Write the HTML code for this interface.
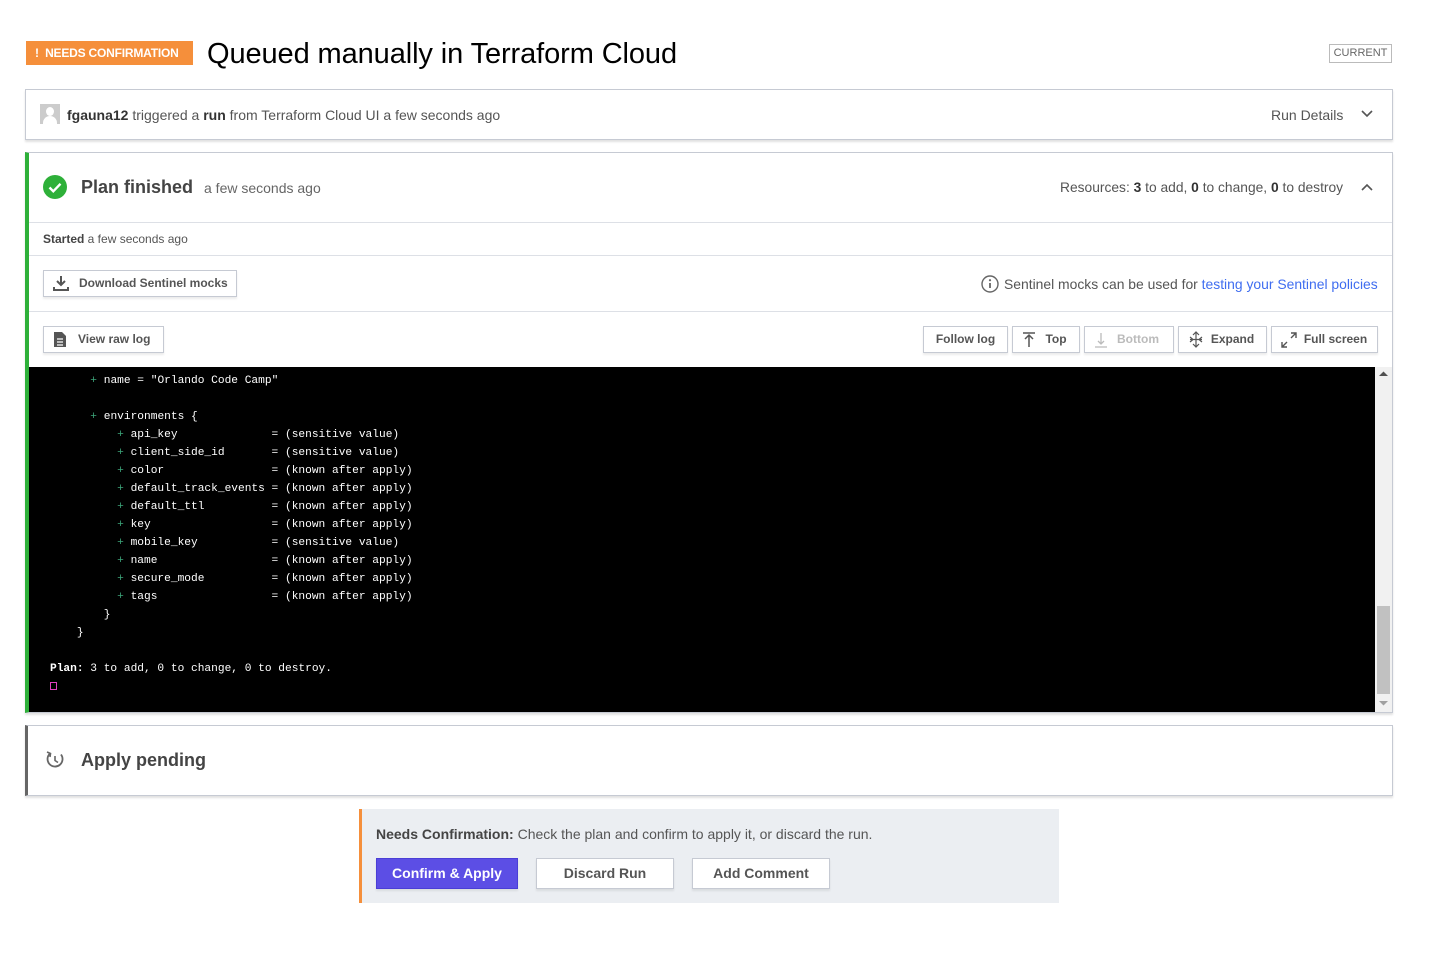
<!DOCTYPE html>
<html><head><meta charset="utf-8">
<style>
*{box-sizing:border-box;margin:0;padding:0}
body{width:1429px;height:956px;background:#fff;font-family:"Liberation Sans",sans-serif;color:#333;position:relative;overflow:hidden}
.abs{position:absolute}
.badge{left:26px;top:41px;width:167px;height:24px;background:#f58f3b;color:#fff;font-size:12px;font-weight:bold;line-height:24px;padding-left:9px;letter-spacing:-0.2px}
h1{position:absolute;left:207px;top:38px;font-size:29px;font-weight:normal;color:#000;letter-spacing:-0.1px}
.current{left:1329px;top:44px;width:63px;height:19px;border:1px solid #bbb;font-size:11px;color:#666;text-align:center;line-height:17px}
.card{border:1px solid #c6cad3;box-shadow:0 2px 2px rgba(0,0,0,.12);background:#fff}
.btn{position:absolute;height:27px;border:1px solid #c6cad3;box-shadow:0 2px 2px rgba(0,0,0,.08);background:#fff;font-size:12px;font-weight:bold;color:#555;line-height:25px;text-align:center}
.term{left:29px;top:367px;width:1346px;height:345px;background:#000;color:#fff;font-family:"Liberation Mono",monospace;font-size:11.2px;line-height:18px;white-space:pre;padding:5px 0 0 21px}
.g{color:#3da57a}
</style></head><body>
<div class="abs badge">!&nbsp;&nbsp;NEEDS CONFIRMATION</div>
<h1>Queued manually in Terraform Cloud</h1>
<div class="abs current">CURRENT</div>

<div class="abs card" style="left:25px;top:89px;width:1368px;height:51px"></div>
<div class="abs" style="left:40px;top:104px;width:20px;height:20px;background:#ccc;overflow:hidden"><div style="position:absolute;left:6px;top:3px;width:8px;height:9px;border-radius:50%;background:#fff"></div><div style="position:absolute;left:3px;top:12px;width:14px;height:10px;border-radius:7px 7px 0 0;background:#fff"></div></div>
<div class="abs" style="left:67px;top:107px;font-size:14px;color:#555"><b style="color:#333">fgauna12</b> triggered a <b style="color:#333">run</b> from Terraform Cloud UI a few seconds ago</div>
<div class="abs" style="left:1271px;top:107px;font-size:14px;color:#555">Run Details</div>
<svg class="abs" style="left:1361px;top:109px" width="12" height="10"><path d="M1 2l5 5 5-5" stroke="#555" stroke-width="1.6" fill="none"/></svg>

<div class="abs card" style="left:25px;top:152px;width:1368px;height:561px;border-left:4px solid #2eb039"></div>
<svg class="abs" style="left:43px;top:175px" width="24" height="24"><circle cx="12" cy="12" r="12" fill="#2eb039"/><path d="M6.5 12.5l3.8 3.8 7.2-7.5" stroke="#fff" stroke-width="2.4" fill="none"/></svg>
<div class="abs" style="left:81px;top:177px;font-size:18px;font-weight:bold;color:#444">Plan finished</div>
<div class="abs" style="left:204px;top:180px;font-size:14px;color:#666">a few seconds ago</div>
<div class="abs" style="left:1060px;top:180px;font-size:13.8px;color:#555">Resources: <b style="color:#333">3</b> to add, <b style="color:#333">0</b> to change, <b style="color:#333">0</b> to destroy</div>
<svg class="abs" style="left:1361px;top:183px" width="12" height="10"><path d="M1 7l5-5 5 5" stroke="#555" stroke-width="1.6" fill="none"/></svg>
<div class="abs" style="left:29px;top:222px;width:1363px;height:1px;background:#dde0e6"></div>
<div class="abs" style="left:43px;top:232px;font-size:12px;color:#555"><b style="color:#444">Started</b> a few seconds ago</div>
<div class="abs" style="left:29px;top:255px;width:1363px;height:1px;background:#dde0e6"></div>
<div class="btn" style="left:43px;top:270px;width:194px;text-align:left;padding-left:35px">Download Sentinel mocks</div>
<svg class="abs" style="left:53px;top:275px" width="16" height="16"><path d="M8 1v9M4 6l4 4 4-4M1 12v3h14v-3" stroke="#555" stroke-width="2" fill="none"/></svg>
<svg class="abs" style="left:981px;top:275px" width="18" height="18"><circle cx="9" cy="9" r="8" stroke="#666" stroke-width="1.4" fill="none"/><path d="M9 8v5" stroke="#666" stroke-width="1.8"/><circle cx="9" cy="5.2" r="1.1" fill="#666"/></svg>
<div class="abs" style="left:1004px;top:276px;font-size:13.9px;color:#555">Sentinel mocks can be used for <span style="color:#3f6df0">testing your Sentinel policies</span></div>
<div class="abs" style="left:29px;top:311px;width:1363px;height:1px;background:#dde0e6"></div>
<div class="btn" style="left:43px;top:326px;width:121px;text-align:left;padding-left:34px">View raw log</div>
<svg class="abs" style="left:53px;top:331px" width="14" height="17"><path d="M1 1h8l4 4v11H1z" fill="#555"/><path d="M4 8h6M4 11h6M4 14h6" stroke="#fff" stroke-width="1.2"/></svg>
<div class="btn" style="left:923px;top:326px;width:85px">Follow log</div>
<div class="btn" style="left:1012px;top:326px;width:68px;padding-left:20px">Top</div>
<svg class="abs" style="left:1022px;top:332px" width="14" height="16"><path d="M1 1h12M7 3v12M3 7l4-4 4 4" stroke="#555" stroke-width="1.5" fill="none"/></svg>
<div class="btn" style="left:1084px;top:326px;width:90px;padding-left:18px;color:#bbb">Bottom</div>
<svg class="abs" style="left:1094px;top:332px" width="14" height="16"><path d="M1 15h12M7 1v11M4 9l3 3 3-3" stroke="#bbb" stroke-width="1.3" fill="none"/></svg>
<div class="btn" style="left:1178px;top:326px;width:89px;padding-left:20px">Expand</div>
<svg class="abs" style="left:1188px;top:331px" width="16" height="17"><path d="M8 1v15M5 4l3-3 3 3M5 13l3 3 3-3M2 6l3 2.5-3 2.5M14 6l-3 2.5 3 2.5M2 8.5h12" stroke="#555" stroke-width="1.2" fill="none"/></svg>
<div class="btn" style="left:1271px;top:326px;width:107px;padding-left:22px">Full screen</div>
<svg class="abs" style="left:1281px;top:332px" width="16" height="16"><path d="M10 1h5v5M15 1l-5 5M6 15H1v-5M1 15l5-5" stroke="#555" stroke-width="1.4" fill="none"/></svg>

<div class="abs term">      <span class="g">+</span> name = "Orlando Code Camp"

      <span class="g">+</span> environments {
          <span class="g">+</span> api_key              = (sensitive value)
          <span class="g">+</span> client_side_id       = (sensitive value)
          <span class="g">+</span> color                = (known after apply)
          <span class="g">+</span> default_track_events = (known after apply)
          <span class="g">+</span> default_ttl          = (known after apply)
          <span class="g">+</span> key                  = (known after apply)
          <span class="g">+</span> mobile_key           = (sensitive value)
          <span class="g">+</span> name                 = (known after apply)
          <span class="g">+</span> secure_mode          = (known after apply)
          <span class="g">+</span> tags                 = (known after apply)
        }
    }

<b>Plan:</b> 3 to add, 0 to change, 0 to destroy.
<span style="display:inline-block;width:7px;height:8px;border:1px solid #e040c0;vertical-align:middle"></span></div>
<div class="abs" style="left:1375px;top:367px;width:17px;height:345px;background:#f1f1f1"></div>
<div class="abs" style="left:1377px;top:606px;width:13px;height:88px;background:#c1c1c1"></div>
<svg class="abs" style="left:1379px;top:371px" width="9" height="6"><path d="M0 5l4.5-4.5L9 5z" fill="#505050"/></svg>
<svg class="abs" style="left:1379px;top:700px" width="9" height="6"><path d="M0 1l4.5 4.5L9 1z" fill="#a0a0a0"/></svg>

<div class="abs card" style="left:25px;top:725px;width:1368px;height:71px;border-left:3px solid #666"></div>
<svg class="abs" style="left:45px;top:750px" width="20" height="20"><path d="M5 3.5A7.5 7.5 0 1 0 16 4.5" stroke="#666" stroke-width="1.8" fill="none"/><path d="M2 2l3.5 1.5L5 7" stroke="#666" stroke-width="1.6" fill="none"/><path d="M10 6v4.5l3 2" stroke="#666" stroke-width="1.6" fill="none"/></svg>
<div class="abs" style="left:81px;top:750px;font-size:18px;font-weight:bold;color:#444">Apply pending</div>

<div class="abs" style="left:359px;top:809px;width:700px;height:94px;background:#ebeef2;border-left:3px solid #f58f3b"></div>
<div class="abs" style="left:376px;top:826px;font-size:14px;color:#555"><b style="color:#444">Needs Confirmation:</b> Check the plan and confirm to apply it, or discard the run.</div>
<div class="btn" style="left:376px;top:858px;width:142px;height:31px;line-height:29px;background:#5c4ee5;border-color:#4a3ed6;color:#fff;font-size:14px">Confirm &amp; Apply</div>
<div class="btn" style="left:536px;top:858px;width:138px;height:31px;line-height:29px;font-size:14px">Discard Run</div>
<div class="btn" style="left:692px;top:858px;width:138px;height:31px;line-height:29px;font-size:14px">Add Comment</div>
</body></html>
